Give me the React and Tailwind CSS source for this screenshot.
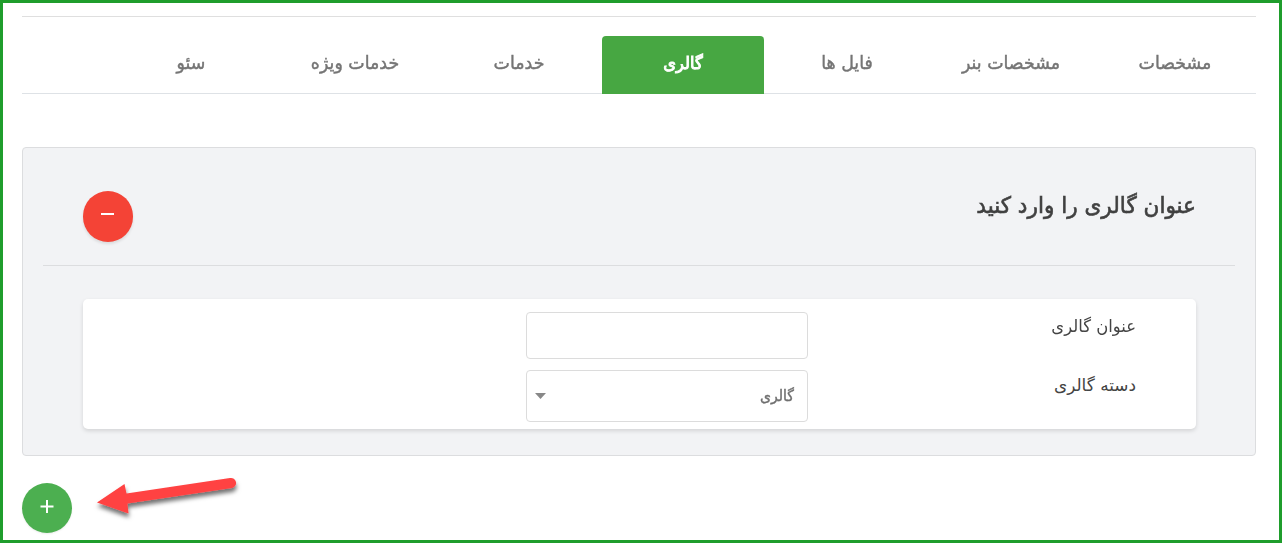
import React, { useState } from "react";

const tabs = [
    { id: 'specs', title: 'مشخصات' },
    { id: 'banner', title: 'مشخصات بنر' },
    { id: 'files', title: 'فایل ها' },
    { id: 'gallery', title: 'گالری' },
    { id: 'services', title: 'خدمات' },
    { id: 'special', title: 'خدمات ویژه' },
    { id: 'seo', title: 'سئو' },
];

const TabBar = ({ active, onChange }) => (
    <div className="flex gap-0.5 h-[58px] mt-[19px] shadow-[inset_0_-1px_0_#dee2e6]">
        {tabs.map((tab) => (
            <button
                key={tab.id}
                className={tab.id === active
                    ? "w-[162px] pb-0.5 rounded-t bg-[#47a742] text-white text-[16.3px] [-webkit-text-stroke:0.9px]"
                    : "w-[162px] pb-1 text-[#757575] text-[17.4px] [-webkit-text-stroke:0.4px]"}
                onClick={() => onChange(tab.id)}>
                <span className="inline-block whitespace-nowrap scale-y-105">{tab.title}</span>
            </button>
        ))}
    </div>
);

const Arrow = () => (
    <svg className="w-[160px] h-[60px]" viewBox="90 470 160 60">
        <defs>
            <filter id="shadow" x="-20%" y="-40%" width="140%" height="200%">
                <feDropShadow dx="0.5" dy="4" stdDeviation="2" floodColor="#000" floodOpacity="0.55" />
            </filter>
        </defs>
        <path
            filter="url(#shadow)"
            fill="#ff4242"
            d="M97 502.5L124.5 484L126.5 493.5L230 478A5 5 0 0 1 232 488L127.5 503.5L128.5 513.5Z" />
    </svg>
);

const App = () => {
    const [active, setActive] = useState('gallery');
    const [title, setTitle] = useState('');

    return (
        <div
            dir="rtl"
            className="box-border h-[543px] w-[1282px] overflow-hidden border-[3px] border-[#1f9d2c] bg-white pr-[23px] pl-[19px] pt-[13px] font-['DejaVu_Sans',sans-serif]">
            <hr className="border-t border-[#dfdfdf]" />
            <TabBar active={active} onChange={setActive} />

            <div className="mt-[53px] h-[309px] rounded border border-[#dcdddf] bg-[#f2f3f5] px-5">
                <div className="flex h-[118px] items-start justify-between border-b border-[#dcdddf] pl-10 pr-[39px]">
                    <h4 className="mt-10 text-[21.6px] leading-9 text-[#404040] whitespace-nowrap [-webkit-text-stroke:0.6px]">
                        <span className="inline-block scale-y-105">عنوان گالری را وارد کنید</span>
                    </h4>
                    <button className="mt-[43px] flex h-[51px] w-[50px] justify-center rounded-full bg-[#f44336] shadow-[0_2px_3px_rgba(0,0,0,0.1)]">
                        <span className="mt-[22px] mr-px h-0.5 w-[13px] bg-white"></span>
                    </button>
                </div>

                <div className="mr-[39px] ml-10 mt-[33px] flex h-[130px] flex-col gap-[11px] rounded-[5px] bg-white pr-[60px] pt-[13px] shadow-[0_2px_4px_rgba(0,0,0,0.13)]">
                    <div className="flex">
                        <label className="w-[328px] text-[16.4px] leading-[30px] text-[#444]">
                            <span className="inline-block scale-y-105">عنوان گالری</span>
                        </label>
                        <input
                            className="h-[47px] w-[282px] rounded border border-[#dcdcdc] px-3 outline-none"
                            value={title}
                            onChange={(e) => setTitle(e.target.value)} />
                    </div>
                    <div className="flex">
                        <label className="w-[328px] text-[16.9px] leading-[30px] text-[#444]">
                            <span className="inline-block">دسته گالری</span>
                        </label>
                        <div className="flex h-[52px] w-[282px] items-center justify-between rounded border border-[#dcdcdc] pl-2 pr-[13px] text-[14px] text-[#6f6f6f] [-webkit-text-stroke:0.4px]">
                            <span className="inline-block scale-y-110">گالری</span>
                            <svg className="h-[6px] w-[11px]" viewBox="0 0 11 6">
                                <path d="M0 0H11L5.5 6Z" fill="#888" />
                            </svg>
                        </div>
                    </div>
                </div>
            </div>

            <div className="mt-[14px] flex flex-row-reverse justify-start">
                <button className="mt-[13px] flex h-[50px] w-[50px] items-start justify-center rounded-full bg-[#4caf50] pt-[17px] shadow-[0_1px_2px_rgba(0,0,0,0.08)]">
                    <svg className="h-[13px] w-[14px]" viewBox="0 0 14 13">
                        <path d="M7 0V13M0.5 6.5H13.5" stroke="#fff" strokeWidth="2" />
                    </svg>
                </button>
                <div className="ml-[18px]">
                    <Arrow />
                </div>
            </div>
        </div>
    )
}

export default App;
